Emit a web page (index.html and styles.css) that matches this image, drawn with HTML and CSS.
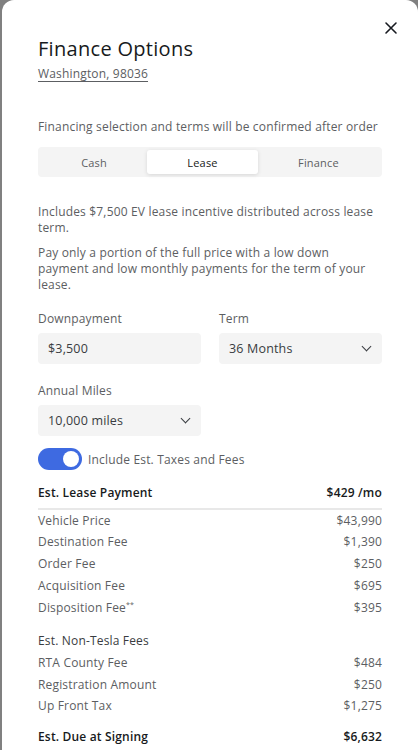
FILE: index.html
```html
<!DOCTYPE html>
<html lang="en">
<head>
  <meta charset="UTF-8" />
  <meta name="viewport" content="width=device-width, initial-scale=1.0"/>
  <title>Finance Options</title>
  <link rel="stylesheet" href="styles.css">
</head>
<body>
  <div class="modal">
    <button class="close-btn" aria-label="Close">
      <svg width="14" height="14" viewBox="0 0 14 14"><path d="M2 2 L12 12 M12 2 L2 12" stroke="#171a20" stroke-width="1.6" stroke-linecap="round"/></svg>
    </button>

    <h1 class="title">Finance Options</h1>
    <a class="location" href="#">Washington, 98036</a>

    <p class="note">Financing selection and terms will be confirmed after order</p>

    <div class="tabs">
      <button class="tab">Cash</button>
      <button class="tab active">Lease</button>
      <button class="tab">Finance</button>
    </div>

    <p class="desc first">Includes $7,500 EV lease incentive distributed across lease term.</p>
    <p class="desc">Pay only a portion of the full price with a low down payment and low monthly payments for the term of your lease.</p>

    <div class="fields">
      <div class="field">
        <label>Downpayment</label>
        <div class="input">$3,500</div>
      </div>
      <div class="field">
        <label>Term</label>
        <div class="input select">36 Months <span class="chev"></span></div>
      </div>
      <div class="field">
        <label>Annual Miles</label>
        <div class="input select">10,000 miles <span class="chev"></span></div>
      </div>
    </div>

    <div class="toggle-row">
      <span class="toggle"><span class="knob"></span></span>
      <span>Include Est. Taxes and Fees</span>
    </div>

    <div class="row head">
      <span>Est. Lease Payment</span>
      <span>$429 /mo</span>
    </div>
    <div class="list">
      <div class="row"><span>Vehicle Price</span><span>$43,990</span></div>
      <div class="row"><span>Destination Fee</span><span>$1,390</span></div>
      <div class="row"><span>Order Fee</span><span>$250</span></div>
      <div class="row"><span>Acquisition Fee</span><span>$695</span></div>
      <div class="row"><span>Disposition Fee<sup>**</sup></span><span>$395</span></div>
    </div>

    <div class="list">
      <div class="row sub"><span>Est. Non-Tesla Fees</span></div>
      <div class="row"><span>RTA County Fee</span><span>$484</span></div>
      <div class="row"><span>Registration Amount</span><span>$250</span></div>
      <div class="row"><span>Up Front Tax</span><span>$1,275</span></div>
    </div>

    <div class="row head total">
      <span>Est. Due at Signing</span>
      <span>$6,632</span>
    </div>
  </div>
</body>
</html>
```

FILE: styles.css
```css
body {
  margin: 0;
  padding: 0;
  background: #808080;
  font-family: "Open Sans", Arial, sans-serif;
  letter-spacing: 0.17px;
  color: #5c5e62;
  overflow: hidden;
}
.modal {
  position: relative;
  margin-left: 2px;
  min-height: 750px;
  background: #fff;
  border-radius: 12px 12px 0 0;
  padding: 37px 36px 0 36px;
  box-sizing: border-box;
}
.close-btn {
  position: absolute;
  top: 21px;
  right: 20px;
  width: 14px;
  height: 14px;
  padding: 0;
  border: none;
  background: none;
  cursor: pointer;
}
.close-btn svg {
  display: block;
}
.title {
  margin: 0;
  font-size: 20px;
  font-weight: 500;
  letter-spacing: 0.3px;
  color: #171a20;
  line-height: 24px;
}
.location {
  display: inline-block;
  margin-top: 4px;
  font-size: 12px;
  color: #5c5e62;
  text-decoration: underline;
  text-underline-offset: 3px;
}
.note {
  margin: 36px 0 0;
  font-size: 12px;
  line-height: 16px;
}
.tabs {
  display: flex;
  margin-top: 12px;
  padding: 3px;
  background: #f4f4f4;
  border-radius: 4px;
}
.tab {
  flex: 1 1 auto;
  height: 24px;
  border: none;
  background: none;
  font-family: inherit;
  letter-spacing: inherit;
  font-size: 11px;
  color: #5c5e62;
  border-radius: 3px;
  cursor: pointer;
}
.tab.active {
  background: #fff;
  color: #171a20;
  box-shadow: 0 1px 4px rgba(0,0,0,0.12);
}
.desc {
  margin: 9px 0 0;
  font-size: 12px;
  line-height: 16px;
}
.desc.first {
  margin-top: 27px;
}
.fields {
  display: grid;
  grid-template-columns: 1fr 1fr;
  column-gap: 18px;
  row-gap: 19px;
  margin-top: 18px;
}
.field label {
  display: block;
  font-size: 12px;
  line-height: 16px;
  margin-bottom: 6px;
}
.input {
  display: flex;
  align-items: center;
  justify-content: space-between;
  height: 31px;
  padding: 0 12px 0 10px;
  background: #f4f4f4;
  border-radius: 4px;
  font-size: 12.5px;
  color: #393c41;
}
.chev {
  width: 6px;
  height: 6px;
  border-right: 1.3px solid #393c41;
  border-bottom: 1.3px solid #393c41;
  transform: translateY(-2px) rotate(45deg);
}
.toggle-row {
  display: flex;
  align-items: center;
  gap: 6px;
  margin-top: 12px;
  font-size: 12px;
}
.toggle {
  display: flex;
  justify-content: flex-end;
  align-items: center;
  width: 44px;
  height: 22px;
  padding: 0 3px;
  box-sizing: border-box;
  background: #3e6ae1;
  border-radius: 11px;
}
.knob {
  width: 16px;
  height: 16px;
  background: #fff;
  border-radius: 50%;
}
.row {
  display: flex;
  justify-content: space-between;
  font-size: 12px;
  line-height: 21.7px;
}
.row.head {
  margin-top: 12px;
  padding-bottom: 4px;
  border-bottom: 2px solid #e8e8e8;
  font-weight: 600;
  color: #171a20;
}
.row.sub {
  color: #393c41;
}
.row.total {
  margin-top: 9px;
}
.list + .list {
  margin-top: 12px;
}
sup {
  font-size: 7px;
  line-height: 0;
}
```
